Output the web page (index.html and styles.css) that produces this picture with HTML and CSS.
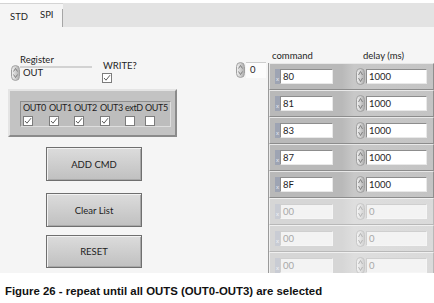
FILE: index.html
```html
<!DOCTYPE html>
<html>
<head>
<meta charset="utf-8">
<link rel="stylesheet" href="styles.css">
</head>
<body>
<div class="screen">
  <div class="tabbar">
    <div class="tabs"><span class="tab tab-std">STD</span><span class="tab tab-spi">SPI</span></div>
    <div class="tabfill"></div>
  </div>
  <div class="panel">
    <div class="left">
      <div class="ctrl-row">
        <div class="register">
          <div class="lbl reg-lbl">Register</div>
          <div class="reg-ctrl">
            <span class="spin"><svg width="7" height="14" viewBox="0 0 7 14"><path d="M1.5 5.5 L3.5 2.5 L5.5 5.5" fill="none" stroke="#6e6e6e" stroke-width="0.8"/><path d="M1.5 8.5 L3.5 11.5 L5.5 8.5" fill="none" stroke="#6e6e6e" stroke-width="0.8"/></svg></span>
            <div class="reg-field">OUT</div>
          </div>
        </div>
        <div class="write">
          <div class="lbl write-lbl">WRITE?</div>
          <span class="chk"><svg width="8" height="8" viewBox="0 0 8 8"><path d="M1 4 L3 6.2 L7 1.2" fill="none" stroke="#4a4a4a" stroke-width="0.9"/></svg></span>
        </div>
      </div>
      <div class="cluster">
        <div class="cluster-in">
          <span class="olbl">OUT0</span><span class="olbl">OUT1</span><span class="olbl">OUT2</span><span class="olbl">OUT3</span><span class="olbl">extD</span><span class="olbl">OUT5</span>
          <span class="chk chk-cell"><svg width="8" height="8" viewBox="0 0 8 8"><path d="M1 4 L3 6.2 L7 1.2" fill="none" stroke="#4a4a4a" stroke-width="0.9"/></svg></span>
          <span class="chk chk-cell"><svg width="8" height="8" viewBox="0 0 8 8"><path d="M1 4 L3 6.2 L7 1.2" fill="none" stroke="#4a4a4a" stroke-width="0.9"/></svg></span>
          <span class="chk chk-cell"><svg width="8" height="8" viewBox="0 0 8 8"><path d="M1 4 L3 6.2 L7 1.2" fill="none" stroke="#4a4a4a" stroke-width="0.9"/></svg></span>
          <span class="chk chk-cell"><svg width="8" height="8" viewBox="0 0 8 8"><path d="M1 4 L3 6.2 L7 1.2" fill="none" stroke="#4a4a4a" stroke-width="0.9"/></svg></span>
          <span class="chk chk-cell"></span>
          <span class="chk chk-cell"></span>
        </div>
      </div>
      <div class="buttons">
        <div class="btn btn-add">ADD CMD</div>
        <div class="btn btn-clear">Clear List</div>
        <div class="btn btn-reset">RESET</div>
      </div>
    </div>
    <div class="right">
      <div class="index">
        <span class="spin"><svg width="7" height="14" viewBox="0 0 7 14"><path d="M1.5 5.5 L3.5 2.5 L5.5 5.5" fill="none" stroke="#6e6e6e" stroke-width="0.8"/><path d="M1.5 8.5 L3.5 11.5 L5.5 8.5" fill="none" stroke="#6e6e6e" stroke-width="0.8"/></svg></span>
        <div class="index-box">0</div>
      </div>
      <div class="array">
        <div class="array-head"><span class="h-cmd">command</span><span class="h-delay">delay (ms)</span></div>
        <div class="array-frame">
          <div class="row"><span class="radix">x</span><span class="field f-cmd">80</span><span class="spin"><svg width="7" height="15" viewBox="0 0 7 15"><path d="M1.5 6 L3.5 2.5 L5.5 6" fill="none" stroke="#6e6e6e" stroke-width="0.8"/><path d="M1.5 9 L3.5 12.5 L5.5 9" fill="none" stroke="#6e6e6e" stroke-width="0.8"/></svg></span><span class="field f-delay">1000</span></div>
          <div class="row"><span class="radix">x</span><span class="field f-cmd">81</span><span class="spin"><svg width="7" height="15" viewBox="0 0 7 15"><path d="M1.5 6 L3.5 2.5 L5.5 6" fill="none" stroke="#6e6e6e" stroke-width="0.8"/><path d="M1.5 9 L3.5 12.5 L5.5 9" fill="none" stroke="#6e6e6e" stroke-width="0.8"/></svg></span><span class="field f-delay">1000</span></div>
          <div class="row"><span class="radix">x</span><span class="field f-cmd">83</span><span class="spin"><svg width="7" height="15" viewBox="0 0 7 15"><path d="M1.5 6 L3.5 2.5 L5.5 6" fill="none" stroke="#6e6e6e" stroke-width="0.8"/><path d="M1.5 9 L3.5 12.5 L5.5 9" fill="none" stroke="#6e6e6e" stroke-width="0.8"/></svg></span><span class="field f-delay">1000</span></div>
          <div class="row"><span class="radix">x</span><span class="field f-cmd">87</span><span class="spin"><svg width="7" height="15" viewBox="0 0 7 15"><path d="M1.5 6 L3.5 2.5 L5.5 6" fill="none" stroke="#6e6e6e" stroke-width="0.8"/><path d="M1.5 9 L3.5 12.5 L5.5 9" fill="none" stroke="#6e6e6e" stroke-width="0.8"/></svg></span><span class="field f-delay">1000</span></div>
          <div class="row"><span class="radix">x</span><span class="field f-cmd">8F</span><span class="spin"><svg width="7" height="15" viewBox="0 0 7 15"><path d="M1.5 6 L3.5 2.5 L5.5 6" fill="none" stroke="#6e6e6e" stroke-width="0.8"/><path d="M1.5 9 L3.5 12.5 L5.5 9" fill="none" stroke="#6e6e6e" stroke-width="0.8"/></svg></span><span class="field f-delay">1000</span></div>
          <div class="row off"><span class="radix">x</span><span class="field f-cmd">00</span><span class="spin"><svg width="7" height="15" viewBox="0 0 7 15"><path d="M1.5 6 L3.5 2.5 L5.5 6" fill="none" stroke="#aaa" stroke-width="0.8"/><path d="M1.5 9 L3.5 12.5 L5.5 9" fill="none" stroke="#aaa" stroke-width="0.8"/></svg></span><span class="field f-delay">0</span></div>
          <div class="row off"><span class="radix">x</span><span class="field f-cmd">00</span><span class="spin"><svg width="7" height="15" viewBox="0 0 7 15"><path d="M1.5 6 L3.5 2.5 L5.5 6" fill="none" stroke="#aaa" stroke-width="0.8"/><path d="M1.5 9 L3.5 12.5 L5.5 9" fill="none" stroke="#aaa" stroke-width="0.8"/></svg></span><span class="field f-delay">0</span></div>
          <div class="row off"><span class="radix">x</span><span class="field f-cmd">00</span><span class="spin"><svg width="7" height="15" viewBox="0 0 7 15"><path d="M1.5 6 L3.5 2.5 L5.5 6" fill="none" stroke="#aaa" stroke-width="0.8"/><path d="M1.5 9 L3.5 12.5 L5.5 9" fill="none" stroke="#aaa" stroke-width="0.8"/></svg></span><span class="field f-delay">0</span></div>
        </div>
      </div>
    </div>
  </div>
</div>
<p class="caption">Figure 26 - repeat until all OUTS (OUT0-OUT3) are selected</p>
</body>
</html>
```
FILE: styles.css
```css
html, body {
  margin: 0;
  padding: 0;
}
body {
  width: 434px;
  height: 303px;
  overflow: hidden;
  background: #ffffff;
  font-family: Lato, "Liberation Sans", sans-serif;
  color: #1e1e1e;
}
.screen {
  margin-top: 3px;
  height: 270px;
  background: #f5f5f5;
  overflow: hidden;
}
.tabbar {
  display: flex;
  height: 24px;
}
.tabs {
  display: flex;
  align-items: flex-end;
  border-top: 1px solid #d4d4d4;
  font-size: 9.5px;
  line-height: 12px;
}
.tab-std {
  padding: 0 0 4px 10px;
}
.tab-spi {
  padding: 0 8px 6px 12px;
  border-right: 1px solid #a6a6a6;
}
.tabfill {
  flex: 1;
  background: #e3e3e3;
}
.panel {
  display: flex;
  height: 246px;
}
.left {
  width: 235px;
  flex: none;
  padding-top: 27px;
  box-sizing: border-box;
}
.lbl {
  font-size: 9.5px;
  line-height: 12px;
  white-space: nowrap;
}
.ctrl-row {
  display: flex;
  align-items: flex-start;
}
.register {
  margin-left: 11px;
  width: 81px;
}
.reg-lbl {
  padding-left: 9px;
}
.reg-ctrl {
  display: flex;
  align-items: flex-start;
}
.spin {
  display: flex;
  align-items: center;
  justify-content: center;
  width: 9px;
  height: 16px;
  box-sizing: border-box;
  border: 1px solid #a0a0a0;
  border-radius: 5px;
  background: linear-gradient(90deg, #efefef, #b0b0b0);
  flex: none;
}
.reg-ctrl .spin {
  margin-top: -1px;
}
.reg-field {
  width: 72px;
  height: 14px;
  box-sizing: border-box;
  border-top: 2px solid #d2d2d2;
  font-size: 9.5px;
  line-height: 9px;
  padding-left: 3px;
}
.write {
  margin-left: 10px;
  margin-top: 6px;
}
.write-lbl {
  padding-left: 1px;
}
.chk {
  display: flex;
  align-items: center;
  justify-content: center;
  width: 10px;
  height: 10px;
  box-sizing: border-box;
  border: 1px solid #7c7c7c;
  background: #ffffff;
}
.write .chk {
  margin-top: 1px;
}
.cluster {
  margin: 6px 0 0 8px;
  width: 169px;
  height: 48px;
  box-sizing: border-box;
  border: 2px solid;
  border-color: #e4e4e4 #8b8b8b #8b8b8b #e4e4e4;
  background: #c3c3c3;
  padding: 10px 4px 8px 10px;
}
.cluster-in {
  height: 26px;
  box-sizing: border-box;
  border: 1px solid;
  border-color: #8e8e8e #dedede #dedede #8e8e8e;
  background: #bdbdbd;
  display: grid;
  grid-template-columns: 26px 25px 26px 25px 20px 25px;
  grid-template-rows: 12px 12px;
  padding-left: 2px;
}
.olbl {
  font-size: 9px;
  line-height: 12px;
  white-space: nowrap;
  letter-spacing: -0.35px;
}
.chk-cell {
  margin-top: 2px;
}
.buttons {
  display: flex;
  flex-direction: column;
  align-items: flex-start;
  margin-left: 46px;
}
.btn {
  width: 96px;
  height: 34px;
  box-sizing: border-box;
  border: 1px solid #6f6f6f;
  background: linear-gradient(#dcdcdc, #c0c0c0);
  box-shadow: inset 1px 1px 0 #f2f2f2, inset -1px -1px 0 #a8a8a8;
  font-size: 9.5px;
  display: flex;
  align-items: center;
  justify-content: center;
  color: #222;
}
.btn-add {
  margin-top: 10px;
}
.btn-clear {
  margin-top: 12px;
}
.btn-reset {
  margin-top: 8px;
  height: 33px;
}
.right {
  display: flex;
  align-items: flex-start;
  padding-top: 23px;
}
.index {
  display: flex;
  margin-top: 12px;
  margin-left: 1px;
}
.index-box {
  width: 20px;
  height: 16px;
  margin-left: 1px;
  box-sizing: border-box;
  background: #fcfcfc;
  border-top: 1px solid #cdcdcd;
  font-size: 9.5px;
  line-height: 14px;
  padding-left: 4px;
}
.array {
  margin-left: 2px;
  width: 166px;
}
.array-head {
  display: flex;
  height: 13px;
  font-size: 9.5px;
  line-height: 12px;
  white-space: nowrap;
}
.h-cmd {
  width: 95px;
  padding-left: 4px;
  box-sizing: border-box;
}
.array-frame {
  height: 210px;
  overflow: hidden;
  border-left: 1px solid #9a9a9a;
}
.row {
  height: 27px;
  box-sizing: border-box;
  border: 1px solid;
  border-color: #e8e8e8 #8e8e8e #8c8c8c #e8e8e8;
  display: flex;
  align-items: center;
  padding-left: 5px;
  background: linear-gradient(90deg, #b9b9b9 0, #b9b9b9 72px, #c8c8c8 84px, #c4c4c4 100%);
}
.radix {
  width: 5px;
  height: 15px;
  background: #9ea4b3;
  color: #e2e5ee;
  font-size: 6px;
  line-height: 19px;
  text-align: center;
  overflow: hidden;
  flex: none;
}
.field {
  height: 15px;
  box-sizing: border-box;
  background: #ffffff;
  border: 1px solid;
  border-color: #8d8d8d #e9e9e9 #e9e9e9 #8d8d8d;
  font-size: 9.5px;
  line-height: 13px;
  padding-left: 2px;
  flex: none;
}
.f-cmd {
  width: 53px;
}
.row .spin {
  margin-left: 23px;
  height: 17px;
}
.f-delay {
  width: 61px;
  margin-left: 1px;
}
.row.off {
  background: linear-gradient(90deg, #d6d6d6 0, #d6d6d6 72px, #dedede 84px, #dadada 100%);
  border-color: #f0f0f0 #b8b8b8 #b8b8b8 #f0f0f0;
}
.row.off .radix {
  background: #c9ccd4;
  color: #eef0f4;
}
.row.off .field {
  background: #f3f3f3;
  border-color: #cfcfcf #f6f6f6 #f6f6f6 #cfcfcf;
  color: #a8a8a8;
}
.row.off .spin {
  border-color: #c8c8c8;
  background: linear-gradient(90deg, #f4f4f4, #d2d2d2);
}
.caption {
  margin: 12px 0 0 5px;
  font-family: "Liberation Sans", Arial, sans-serif;
  font-weight: bold;
  font-size: 11.4px;
  line-height: 13px;
  color: #111;
}
```
